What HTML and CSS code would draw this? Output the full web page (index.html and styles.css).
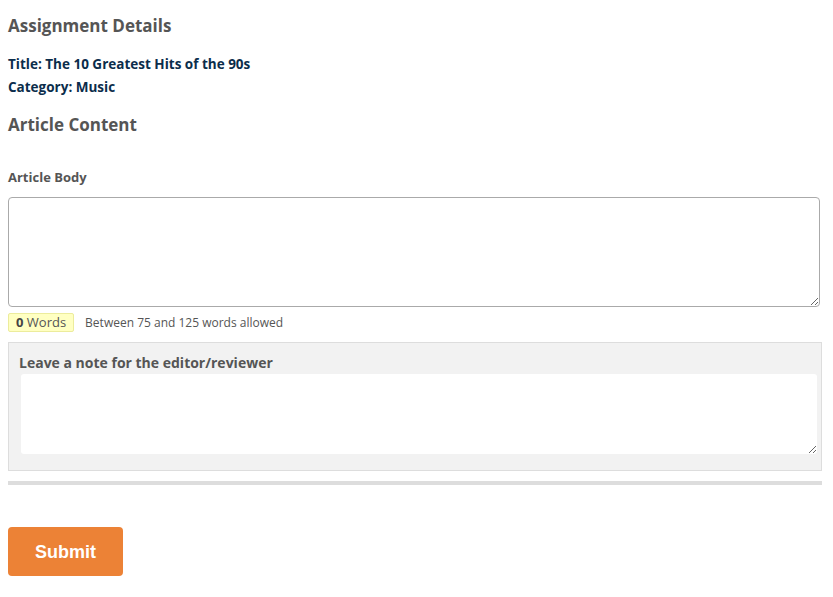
FILE: index.html
```html
<!DOCTYPE html>
<html lang="en">
<head>
    <meta charset="UTF-8">
    <title>Assignment</title>
    <link rel="stylesheet" href="styles.css">
</head>
<body>
    <h2 class="section-title">Assignment Details</h2>
    <div class="details">
        <p>Title: The 10 Greatest Hits of the 90s</p>
        <p>Category: Music</p>
    </div>
    <h2 class="section-title">Article Content</h2>

    <form class="article-form">
        <label class="field-label" for="articleBody">Article Body</label>
        <textarea id="articleBody" class="body-input"></textarea>
        <div class="word-info">
            <span class="word-count"><b>0</b> Words</span>
            <span class="word-limit">Between 75 and 125 words allowed</span>
        </div>

        <div class="note-box">
            <label class="note-label" for="note">Leave a note for the editor/reviewer</label>
            <textarea id="note" class="note-input"></textarea>
        </div>
        <div class="divider"></div>

        <button type="button" class="submit-btn">Submit</button>
    </form>
</body>
</html>
```

FILE: styles.css
```css
body {
    font-family: "Open Sans", Arial, sans-serif;
    margin: 0;
    padding: 8px;
    color: #555;
}
.section-title {
    font-size: 17px;
    font-weight: bold;
    color: #555;
    margin: 6px 0 0;
    line-height: 24px;
}
.details {
    margin: 15px 0 14px;
}
.details p {
    margin: 0;
    font-size: 13.5px;
    font-weight: bold;
    line-height: 23px;
    color: #0b2d4b;
}
.article-form {
    width: 814px;
    margin-top: 31px;
}
.field-label {
    display: block;
    font-size: 13px;
    font-weight: bold;
    line-height: 18px;
    margin-bottom: 11px;
}
.body-input {
    display: block;
    box-sizing: border-box;
    width: 812px;
    height: 110px;
    border: 1px solid #aaa;
    border-radius: 4px;
    margin: 0;
    font-family: inherit;
}
.word-info {
    display: flex;
    align-items: center;
    gap: 11px;
    margin-top: 6px;
}
.word-count {
    background: #ffffc2;
    border: 1px solid #ecec9c;
    border-radius: 2px;
    font-size: 13px;
    line-height: 17px;
    padding: 0 7px;
    color: #555;
}
.word-count b {
    color: #444;
}
.word-limit {
    font-size: 12px;
    color: #555;
}
.note-box {
    margin-top: 10px;
    background: #f2f2f2;
    border: 1px solid #ddd;
    padding: 10px 4px 16px 10px;
}
.note-label {
    display: block;
    font-size: 14px;
    font-weight: bold;
    line-height: 20px;
    margin-bottom: 1px;
}
.note-input {
    display: block;
    box-sizing: border-box;
    width: 796px;
    height: 80px;
    margin: 0 0 0 2px;
    border: none;
    border-radius: 3px;
    background: #fff;
    font-family: inherit;
}
.divider {
    height: 4px;
    background: #ddd;
    margin-top: 10px;
}
.submit-btn {
    margin-top: 42px;
    width: 115px;
    height: 49px;
    padding-top: 3px;
    background: #ec8236;
    border: none;
    border-radius: 4px;
    color: #fff;
    font-family: "Liberation Sans", Arial, sans-serif;
    font-size: 18px;
    font-weight: bold;
    cursor: pointer;
}
```
